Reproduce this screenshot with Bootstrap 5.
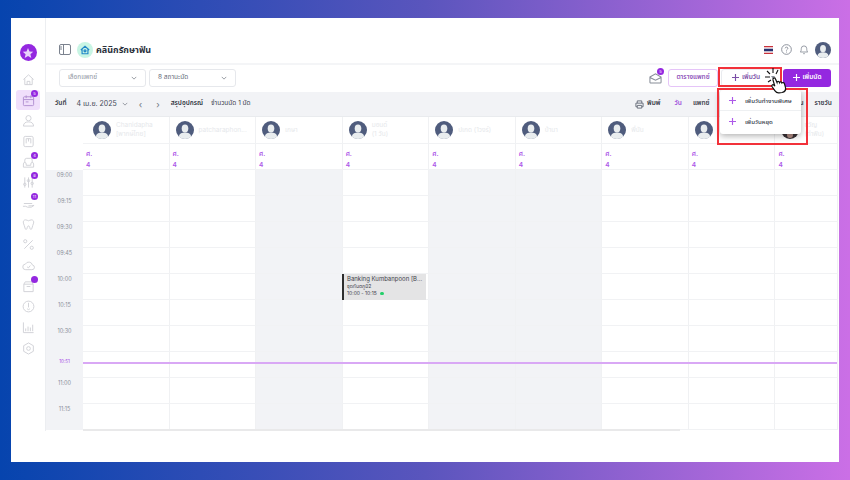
<!DOCTYPE html>
<html lang="th">
<head>
    <meta charset="UTF-8">
    <meta name="viewport" content="width=device-width, initial-scale=1.0">
    <title>คลินิกรักษาฟัน</title>
    <link href="https://cdn.jsdelivr.net/npm/bootstrap@5.3.0/dist/css/bootstrap.min.css" rel="stylesheet">
    <style>
        html, body { height: 100%; }
        body {
            width: 850px; height: 480px; overflow: hidden; padding: 18px 11px;
            background: linear-gradient(90deg, #0644ae 0%, #5a55bd 50%, #cb6fe6 100%);
            font-family: Inter, "Noto Sans", "Noto Sans Thai", "Liberation Sans", sans-serif;
            font-size: 7px; color: #3d4350;
        }
        .shot { height: 444px; background: #fff; position: relative; }
        .side-rail { width: 35px; padding-top: 26px; border-right: 1px solid #eceef1; height: 413px; }
        .rail-logo { width: 17px; height: 17px; border-radius: 50%; background: #9428e0; margin-bottom: 8px; flex: none; }
        .rail-item { width: 24px; height: 20.7px; position: relative; flex: none; }
        .rail-item svg { width: 13px; height: 13px; fill: none; stroke: #cfd1d6; stroke-width: 1; }
        .rail-item.on { background: #f0dffb; border-radius: 3px; }
        .rail-item.on svg { stroke: #b08fd0; }
        .dot-count {
            position: absolute; top: 0; right: 2px; width: 7px; height: 7px; border-radius: 50%;
            background: #9428e0; color: #fff; font-size: 4px; line-height: 7px; text-align: center;
        }
        .page-body { width: 793px; }
        .head-row { height: 29px; margin-top: 18px; padding: 0 8px 0 13px; border-bottom: 2px solid #f4f5f7; }
        .clinic-ico { width: 16px; height: 16px; border-radius: 50%; background: #c8f5e4; margin: 0 3px 0 6px; }
        .clinic-name { font-size: 9px; font-weight: 700; color: #2b303a; }
        .tool-row { height: 27px; padding: 0 8px 2px 13px; }
        .pick {
            width: 87px; height: 18px; border: 1px solid #e6e8ec; border-radius: 3px; padding: 0 8px;
            margin-right: 3px; font-size: 6.5px; color: #666c78;
        }
        .pick.muted { color: #9197a3; }
        .chev { width: 6px; height: 6px; fill: none; stroke: #858a93; stroke-width: 1.1; }
        .btn-doc, .btn-day, .btn-appt {
            height: 18px; font-size: 6.5px; font-weight: 600; padding: 0; border-radius: 3px;
            display: flex; align-items: center; justify-content: center; gap: 3px;
        }
        .btn-doc { width: 50px; border: 1px solid #e5c4f8; background: #fff; color: #8f55bb; margin: 0 3px 0 6px; }
        .btn-day { width: 61px; border: 1px solid #e9ebef; background: #fff; color: #7c4fa8; justify-content: flex-start; padding-left: 10px; }
        .btn-appt { width: 48px; border: 0; background: #9428e0; color: #fff; margin-left: 1px; }
        .plus-ico { width: 7px; height: 7px; stroke: currentColor; stroke-width: 1.3; flex: none; }
        .day-caret { width: 0; height: 0; border: 2px solid transparent; border-top: 3px solid #8a8f99; margin: 2px 0 0 8px; }
        .mail-wrap { position: relative; width: 13px; height: 13px; }
        .mail-wrap svg { width: 13px; height: 13px; fill: none; stroke: #878d98; stroke-width: 1.1; }
        .mail-wrap .dot-count { top: -3px; right: -2px; }
        .date-row { height: 25px; background: #f2f3f6; padding: 0 7px 0 9px; border-bottom: 1px solid #e9ebee; font-size: 6.5px; }
        .date-row b { font-weight: 600; color: #333843; }
        .date-val { font-size: 7px; margin: 0 5px 0 10px; color: #444a56; }
        .pager { margin: 0 7px; font-size: 9px; color: #6d7380; line-height: 1; }
        .pager.first { margin-left: 11px; }
        .print-ico { width: 9px; height: 9px; fill: none; stroke: #6d7380; stroke-width: 1.1; margin-right: 3px; }
        .view-tab { margin-left: 11px; font-weight: 600; color: #3b404b; }
        .view-tab.on { color: #9c4fdc; margin-left: 14px; }
        .tab-gap { margin-left: 80px; }
        .cal-wrap { position: relative; height: 314px; }
        .cal-grid {
            display: grid; grid-template-columns: 37px repeat(8, 86.55px) 63px;
            grid-template-rows: 27px 26px repeat(10, 26px);
        }
        .doc-cell, .day-cell, .slot { border-right: 1px solid #f0f1f3; border-bottom: 1px solid #f1f2f4; }
        .doc-cell { padding-left: 6px; gap: 5px; color: #e6e8eb; font-size: 6.5px; line-height: 9px; white-space: nowrap; overflow: hidden; }
        .doc-cell.wide-pad { padding-left: 10px; }
        .doc-ava { width: 18px; height: 18px; flex: none; }
        .day-cell { padding: 5px 0 0 3px; color: #ad59e8; font-size: 6.5px; line-height: 11px; font-weight: 600; }
        .time-cell { background: #f2f3f6; color: #8a8f99; font-size: 5.5px; text-align: center; padding-top: 1px; }
        .time-top { background: #fff; }
        .slot.closed { background: #f2f3f6; }
        .now-line { position: absolute; left: 37px; right: 2px; top: 245px; height: 2px; background: #d9a8f5; }
        .now-text { position: absolute; left: 0; width: 37px; top: 242px; text-align: center; font-size: 4.5px; color: #a545e6; }
        .appt {
            position: absolute; left: 296px; top: 157px; width: 84px; height: 26px;
            background: #e4e4e5; border-left: 2px solid #2d2d2d; padding: 1px 3px;
            font-size: 5px; line-height: 7.5px; color: #3f434b; overflow: hidden;
        }
        .appt-title { font-size: 6px; white-space: nowrap; }
        .appt-dot { display: inline-block; width: 3.5px; height: 3.5px; border-radius: 50%; background: #24cf6a; margin-left: 2px; }
        .scroll-bar { position: absolute; left: 37px; top: 311.5px; width: 597px; height: 2px; background: #e9e9ea; }
        .add-menu {
            position: absolute; left: 709px; top: 72px; width: 81px; height: 44px; background: #fff;
            border-radius: 3px; box-shadow: 0 2px 6px rgba(0,0,0,.3); font-size: 6px; font-weight: 600; color: #4a4f5a;
        }
        .add-menu > div { height: 20px; padding-left: 9px; gap: 9px; }
        .add-menu > div + div { height: 24px; padding-bottom: 2px; border-top: 1px solid #eef0f2; }
        .add-menu .plus-ico { color: #ad59e8; }
        .red-box { position: absolute; border: 2px solid #f2313a; }
        .red-one { left: 707px; top: 49px; width: 64px; height: 20px; }
        .red-two { left: 706px; top: 70px; width: 91px; height: 57px; }
        .hand { position: absolute; left: 754px; top: 50px; width: 24px; height: 26px; }
    </style>
</head>
<body>
    <div class="shot d-flex">
        <div class="side-rail d-flex flex-column align-items-center" id="rail">
            <div class="rail-logo d-flex align-items-center justify-content-center">
                <svg width="12" height="12" viewBox="0 0 24 24"><path fill="#e9d2fb" d="M12 2l3 7 7.500 .6-5.700 4.900 1.800 7.300L12 18l-6.600 3.800 1.800-7.300L1.500 9.600 9 9z"/></svg>
            </div>
        </div>
        <div class="page-body">
            <div class="head-row d-flex align-items-center">
                <svg width="12" height="11" viewBox="0 0 12 11" fill="none" stroke="#7b828e" stroke-width="1"><rect x=".5" y=".5" width="11" height="10" rx="1.500"/><path d="M4.500 .5v10M1 3h2M1 5h2" /></svg>
                <div class="clinic-ico d-flex align-items-center justify-content-center">
                    <svg width="10" height="10" viewBox="0 0 12 12" fill="none" stroke="#1f86c7" stroke-width="1.400"><path d="M1 6l5-4.500L11 6M2.500 5v5.500h7V5"/><circle cx="6" cy="7" r="1.200"/></svg>
                </div>
                <span class="clinic-name">คลินิกรักษาฟัน</span>
                <div class="ms-auto d-flex align-items-center">
                    <svg width="9" height="8" viewBox="0 0 9 8"><rect width="9" height="8" fill="#c8323c"/><rect y="1.300" width="9" height="5.400" fill="#fff"/><rect y="2.700" width="9" height="2.600" fill="#27306e"/></svg>
                    <svg class="ms-2" width="11" height="11" viewBox="0 0 12 12" fill="none" stroke="#858b96"><circle cx="6" cy="6" r="5.300"/><path d="M4.500 4.700C4.600 3 7.500 3 7.500 4.700 7.500 5.900 6 5.800 6 7.200M6 8.300v1"/></svg>
                    <svg style="margin-left:7px" width="10" height="11" viewBox="0 0 12 13" fill="none" stroke="#858b96"><path d="M1.500 9.500c1-1 1.200-2 1.200-4a3.300 3.300 0 0 1 6.600 0c0 2 .2 3 1.200 4zM5 11.500h2"/></svg>
                    <svg style="margin-left:6px" width="16" height="16" viewBox="0 0 18 18"><use href="#ava-shape"/></svg>
                </div>
            </div>
            <div class="tool-row d-flex align-items-center">
                <div class="pick muted d-flex align-items-center justify-content-between">เลือกแพทย์ <svg class="chev" viewBox="0 0 8 8"><path d="M1 2.500l3 3 3-3"/></svg></div>
                <div class="pick d-flex align-items-center justify-content-between">8 สถานะนัด <svg class="chev" viewBox="0 0 8 8"><path d="M1 2.500l3 3 3-3"/></svg></div>
                <div class="mail-wrap ms-auto">
                    <svg viewBox="0 0 14 14"><path d="M1 6.500L7 3l6 3.500V12a1 1 0 0 1-1 1H2a1 1 0 0 1-1-1zM1 7l6 3 6-3"/></svg>
                    <span class="dot-count">5</span>
                </div>
                <button class="btn-doc">ตารางแพทย์</button>
                <button class="btn-day"><svg class="plus-ico" viewBox="0 0 8 8"><path d="M4 0v8M0 4h8"/></svg> เพิ่มวัน <span class="day-caret"></span></button>
                <button class="btn-appt"><svg class="plus-ico" viewBox="0 0 8 8"><path d="M4 0v8M0 4h8"/></svg> เพิ่มนัด</button>
            </div>
            <div class="date-row d-flex align-items-center">
                <b>วันที่</b>
                <span class="date-val">4 เม.ย. 2025</span>
                <svg class="chev" viewBox="0 0 8 8"><path d="M1 2.500l3 3 3-3"/></svg>
                <span class="pager first">‹</span><span class="pager">›</span>
                <b class="ms-1">สรุปอุปกรณ์</b>
                <span class="ms-2">จำนวนนัด 1 นัด</span>
                <svg class="print-ico ms-auto" viewBox="0 0 10 10"><path d="M2.500 3.500V1h5v2.500M2.500 7.500H1v-4h8v4H7.500M2.500 6h5v3h-5z"/></svg>
                <b>พิมพ์</b>
                <span class="view-tab on">วัน</span>
                <span class="view-tab">แพทย์</span>
                <span class="view-tab tab-gap">เดือน</span>
                <span class="view-tab">รายวัน</span>
            </div>
            <div class="cal-wrap">
                <div class="cal-grid" id="calGrid"></div>
                <div class="now-text">10:51</div>
                <div class="now-line"></div>
                <div class="appt">
                    <div class="appt-title">Banking Kumbanpoon [B...</div>
                    <div>ชุดทันตภูมิ2</div>
                    <div>10:00 - 10:15 <span class="appt-dot"></span></div>
                </div>
                <div class="scroll-bar"></div>
            </div>
        </div>

        <div class="red-box red-one"></div>
        <div class="add-menu">
            <div class="d-flex align-items-center"><svg class="plus-ico" viewBox="0 0 8 8"><path d="M4 0v8M0 4h8"/></svg> เพิ่มวันทำงานพิเศษ</div>
            <div class="d-flex align-items-center"><svg class="plus-ico" viewBox="0 0 8 8"><path d="M4 0v8M0 4h8"/></svg> เพิ่มวันหยุด</div>
        </div>
        <div class="red-box red-two"></div>
        <svg class="hand" viewBox="0 0 24 26">
            <path d="M0 9h5M2 3l3 3M8 0v5M13 2l-2 4M3 14l3-2" stroke="#111" stroke-width="1.100" fill="none"/>
            <path d="M8 12c-.5-2 1.800-2.800 2.500-1l1.500 3.500c.2-1.500 2.200-1.500 2.500 0 .4-1 2.200-.8 2.400.4.600-.7 2.200-.4 2.600 1l1 3.600c.5 2.500-1 4.500-3.500 5l-3 .4c-2 .2-3-.6-4-2L7 18.500c-.7-1.300.7-2.400 1.800-1.400l1 1z" fill="#fff" stroke="#111" stroke-width="1.200"/>
        </svg>
    </div>

    <svg width="0" height="0" class="position-absolute">
        <symbol id="ava-shape" viewBox="0 0 18 18">
            <circle cx="9" cy="9" r="9" fill="#4f5c7d"/>
            <ellipse cx="9" cy="7.500" rx="3.300" ry="4" fill="#e9edef"/>
            <path d="M2.700 15.400C3.500 12.500 6 11.500 9 11.500s5.500 1 6.300 3.900A9 9 0 0 1 2.700 15.400z" fill="#e9edef"/>
        </symbol>
        <symbol id="ava-photo" viewBox="0 0 18 18">
            <circle cx="9" cy="9" r="9" fill="#3a3236"/>
            <ellipse cx="9" cy="14" rx="3" ry="3" fill="#b58f86"/>
        </symbol>
    </svg>

    <script>
        // sidebar icons, top to bottom
        const railIcons = [
            ['<path d="M1.500 7L7 2l5.500 5M3 6v6.500h8V6M5.500 12.500V9h3v3.500"/>'],
            ['<rect x="1.500" y="3" width="11" height="9.500" rx="1"/><path d="M1.500 6h11M4.500 1.500v3M9.500 1.500v3M4 8.500h3"/>', 5, true],
            ['<circle cx="7" cy="4.500" r="2.800"/><path d="M1.500 13c.3-3.500 2.500-4.500 5.500-4.500s5.200 1 5.500 4.500z"/>'],
            ['<rect x="2" y="1.500" width="10" height="11" rx="1.500"/><path d="M4.500 4h5M4.500 4v5M9.500 4v5M7 4v3"/>'],
            ['<path d="M1.500 12V8.500a1.500 1.500 0 0 1 3 0V10h5V8.500a1.500 1.500 0 0 1 3 0V12zM3 7V4.500A2 2 0 0 1 5 2.500h4a2 2 0 0 1 2 2V7"/>', 4],
            ['<path d="M3 1.500v11M7 1.500v11M11 1.500v11"/><circle cx="3" cy="9" r="1.300"/><circle cx="7" cy="5" r="1.300"/><circle cx="11" cy="8" r="1.300"/>', 8],
            ['<path d="M1 10h3l2 1h4l3-2-3 .5H7M2 7h9"/>', 11],
            ['<path d="M4 2c-2 0-3 1.500-2.500 3.500C2 7.500 3 9 3.300 11c.2 1.500 1.500 1.800 2 .5.400-1.500.7-3 1.700-3s1.300 1.500 1.700 3c.5 1.300 1.800 1 2-.5.3-2 1.300-3.500 1.800-5.500C13 3.500 12 2 10 2 8.500 2 8 3 7 3S5.500 2 4 2z"/>'],
            ['<path d="M11.500 2.500l-9 9"/><circle cx="3.500" cy="3.500" r="1.700"/><circle cx="10.500" cy="10.500" r="1.700"/>'],
            ['<path d="M4 11.500a3 3 0 0 1-.3-6 4 4 0 0 1 7.500 1 2.500 2.500 0 0 1-.7 5zM5.500 8.500l1.500 1 2-2.500"/>'],
            ['<path d="M2 4.500h10v8H2zM2 4.500L3.500 2h7L12 4.500M5 7h4"/>', ''],
            ['<circle cx="7" cy="7" r="5.800"/><path d="M7 3v5M5.500 9.500a2 2 0 0 0 3 0"/>'],
            ['<path d="M1.500 1.500v11h11M4 11V8M6.500 11V6M9 11V7M11.500 11V4"/>'],
            ['<path d="M7 1l5.200 3v6L7 13l-5.200-3V4z"/><circle cx="7" cy="7" r="2"/>']
        ];
        document.getElementById('rail').insertAdjacentHTML('beforeend', railIcons.map(([shape, count, on]) =>
            `<div class="rail-item d-flex align-items-center justify-content-center${on ? ' on' : ''}">
                <svg viewBox="0 0 14 14">${shape}</svg>
                ${count !== undefined ? `<span class="dot-count">${count}</span>` : ''}
            </div>`).join(''));

        // calendar columns: doctor name + closed day or not
        const doctors = [
            ['Chanidapha<br>[พากษ์ไทย]', false],
            ['patcharaphon...', false],
            ['เกษา', true],
            ['มอนด์<br>(1 วัน)', false],
            ['ปเกด (1วงร์)', true],
            ['บ้านา', true],
            ['พี่นัน', false],
            ['', false],
            ['ขวัญ<br>(ทำฟัน)', false]
        ];
        const times = ['09:00', '09:15', '09:30', '09:45', '10:00', '10:15', '10:30', '', '11:00', '11:15'];
        let html = '<div class="time-top"></div>';
        html += doctors.map((d, i) => `<div class="doc-cell d-flex align-items-center${i == 0 ? ' wide-pad' : ''}"><svg class="doc-ava"><use href="#${i == 8 ? 'ava-photo' : 'ava-shape'}"/></svg><span>${d[0]}</span></div>`).join('');
        html += '<div class="time-top"></div>';
        html += doctors.map(() => '<div class="day-cell">ศ.<br>4</div>').join('');
        times.forEach(t => {
            html += `<div class="time-cell">${t}</div>`;
            html += doctors.map(d => `<div class="slot${d[1] ? ' closed' : ''}"></div>`).join('');
        });
        document.getElementById('calGrid').innerHTML = html;
    </script>
    <script src="https://cdn.jsdelivr.net/npm/bootstrap@5.3.0/dist/js/bootstrap.bundle.min.js"></script>
</body>
</html>
